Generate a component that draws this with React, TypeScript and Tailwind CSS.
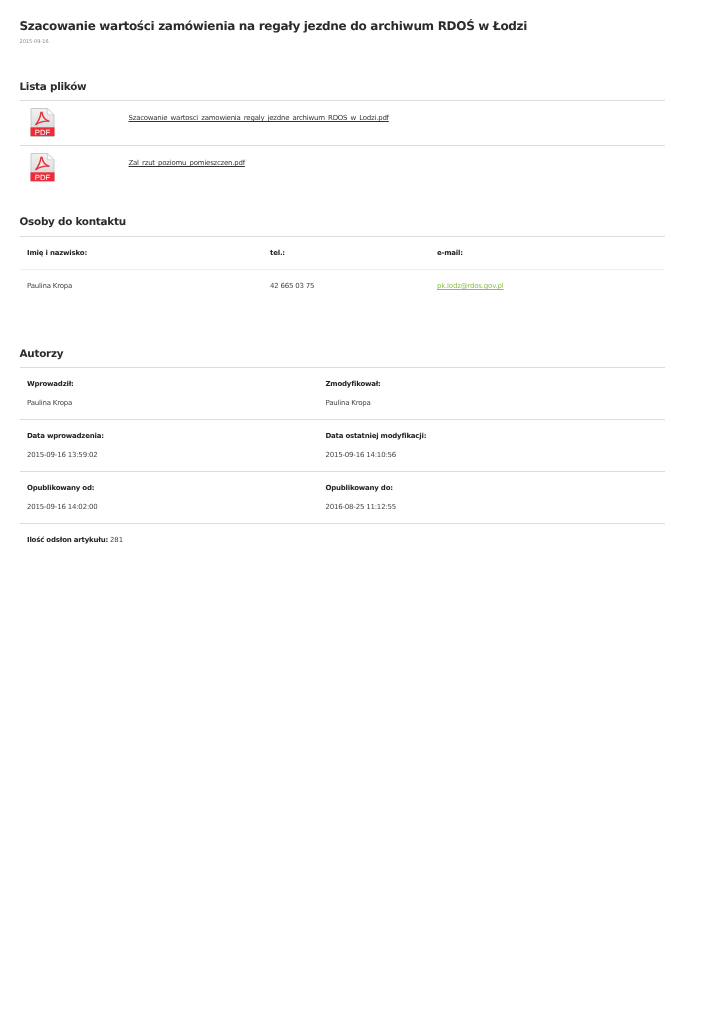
const font = "font-['DejaVu_Sans',sans-serif] [text-rendering:geometricPrecision]"

function PdfIcon() {
  return (
    <svg width="25" height="29" viewBox="0 0 25 30" preserveAspectRatio="none" className="block">
      <defs>
        <linearGradient id="sheet" x1="0" y1="0" x2="0" y2="1">
          <stop offset="0" stopColor="#f2f2f2" />
          <stop offset="1" stopColor="#d2d2d2" />
        </linearGradient>
      </defs>
      <path d="M1 0.5H17.5L24 7V29.5H1Z" fill="url(#sheet)" stroke="#c8c8c8" />
      <path d="M17.5 0.5V7H24Z" fill="#fafafa" stroke="#c4c4c4" strokeWidth="0.6" />
      <path d="M11 4.5C10.6 8.5 9 13 5.5 17.5C9.5 14.5 14.5 13.2 19.5 13.8C15.5 12.5 12.5 9 12 4.5Z" fill="none" stroke="#e8303a" strokeWidth="1.4" />
      <rect x="0.5" y="20" width="24" height="9" fill="#ee2b39" />
      <text x="12.5" y="27.5" textAnchor="middle" fontSize="7.8" fill="#fff" fontFamily="Liberation Sans, sans-serif">PDF</text>
    </svg>
  )
}

function FileRow({ name }: { name: string }) {
  return (
    <div className="flex h-[45px] border-t border-[#dddddd]">
      <div className="w-[109px] pl-[10px] pt-[7px]">
        <PdfIcon />
      </div>
      <a className="mt-[11px] h-[13px] text-[7px] leading-[13px] tracking-[-0.24px] text-[#333333] underline">{name}</a>
    </div>
  )
}

function Field({ label, value }: { label: string; value: string }) {
  return (
    <div className="w-[298.5px] pl-[7.5px]">
      <div className="text-[7px] leading-[13px] font-bold tracking-[-0.22px] text-[#222222]">{label}</div>
      <div className="mt-[5.5px] text-[7px] leading-[13px] tracking-[-0.2px] text-[#444444]">{value}</div>
    </div>
  )
}

function AuthorRow({ left, right }: { left: [string, string]; right: [string, string] }) {
  return (
    <div className="flex h-[52px] border-t border-[#dddddd] pt-[10px]">
      <Field label={left[0]} value={left[1]} />
      <Field label={right[0]} value={right[1]} />
    </div>
  )
}

// the reference is a downscaled capture, so the page gets a very slight blur
export default function App() {
  return (
    <div className={`${font} min-h-[1024px] bg-white px-[19.5px] pt-[15.5px] text-[#2b2b2b] blur-[0.3px]`}>
      <div className="w-[645.5px]">
        <h1 className="text-[12px] leading-[20px] font-bold tracking-[-0.31px]">
          Szacowanie wartości zamówienia na regały jezdne do archiwum RDOŚ w Łodzi
        </h1>
        <div className="mt-[1.5px] text-[5px] leading-[10px] text-[#888888]">2015-09-16</div>

        <h2 className="mt-[31px] text-[10.4px] leading-[18px] font-bold tracking-[-0.25px]">Lista plików</h2>
        <div className="mt-[4px]">
          <FileRow name="Szacowanie_wartosci_zamowienia_regaly_jezdne_archiwum_RDOS_w_Lodzi.pdf" />
          <FileRow name="Zal_rzut_poziomu_pomieszczen.pdf" />
        </div>

        <h2 className="mt-[23px] text-[10.4px] leading-[18px] font-bold tracking-[-0.25px]">Osoby do kontaktu</h2>
        <div className="mt-[5px] border-t border-[#dddddd]">
          <div className="flex h-[33px] items-center border-b border-[#eeeeee] text-[7px] font-bold tracking-[-0.2px] text-[#222222]">
            <div className="w-[250.5px] pl-[7.5px]">Imię i nazwisko:</div>
            <div className="w-[167px]">tel.:</div>
            <div>e-mail:</div>
          </div>
          <div className="flex h-[33px] items-center text-[7px] tracking-[-0.2px] text-[#444444]">
            <div className="w-[250.5px] pl-[7.5px]">Paulina Kropa</div>
            <div className="w-[167px]">42 665 03 75</div>
            <a className="text-[#8cc04b] underline">pk.lodz@rdos.gov.pl</a>
          </div>
        </div>

        <h2 className="mt-[42px] text-[10.4px] leading-[18px] font-bold tracking-[-0.25px]">Autorzy</h2>
        <div className="mt-[4px]">
          <AuthorRow left={["Wprowadził:", "Paulina Kropa"]} right={["Zmodyfikował:", "Paulina Kropa"]} />
          <AuthorRow
            left={["Data wprowadzenia:", "2015-09-16 13:59:02"]}
            right={["Data ostatniej modyfikacji:", "2015-09-16 14:10:56"]}
          />
          <AuthorRow
            left={["Opublikowany od:", "2015-09-16 14:02:00"]}
            right={["Opublikowany do:", "2016-08-25 11:12:55"]}
          />
          <div className="border-t border-[#dddddd] pt-[10px] pl-[7.5px] text-[7px] leading-[13px] tracking-[-0.2px] text-[#444444]">
            <b className="text-[#222222]">Ilość odsłon artykułu:</b> 281
          </div>
        </div>
      </div>
    </div>
  )
}
